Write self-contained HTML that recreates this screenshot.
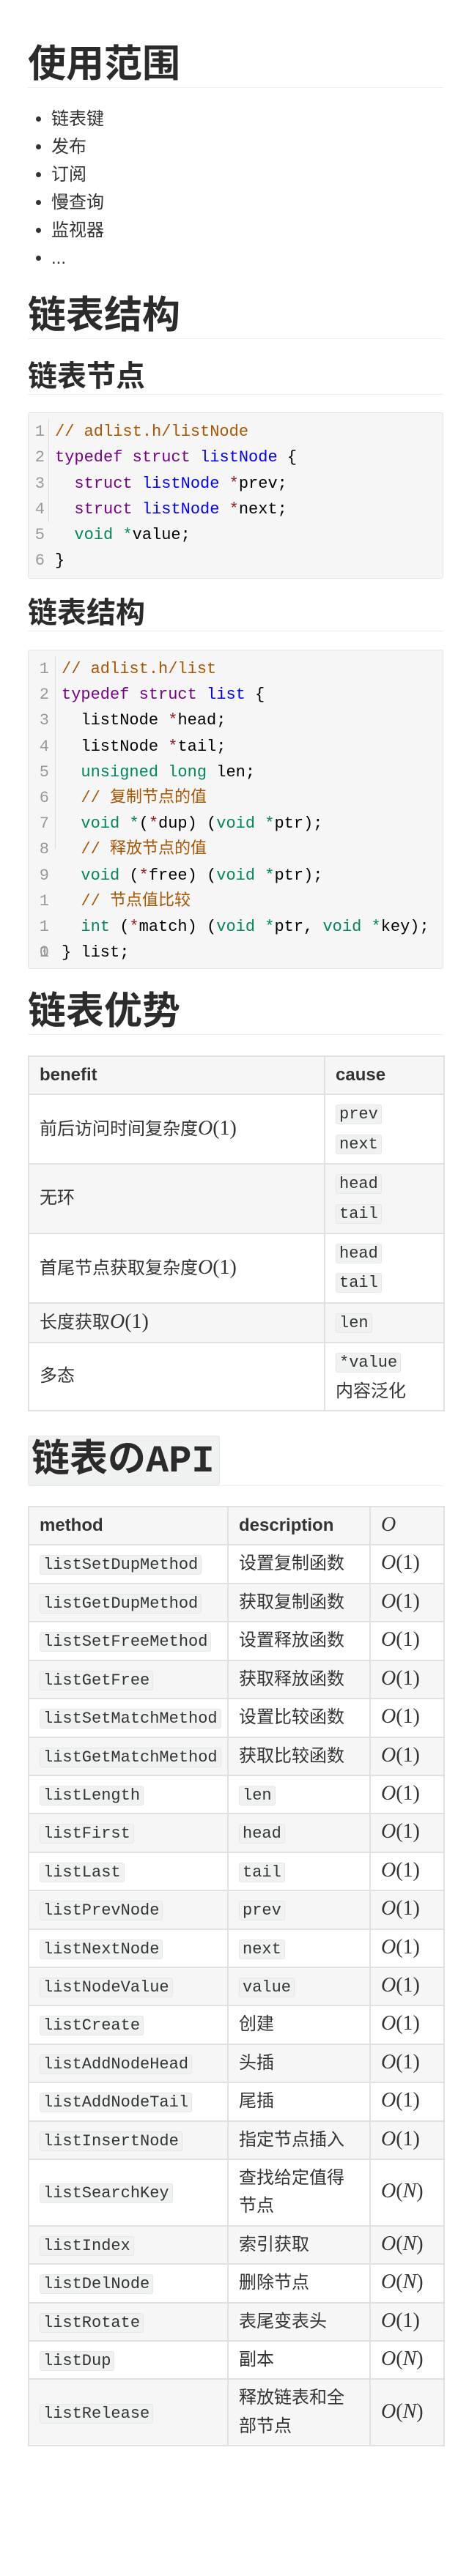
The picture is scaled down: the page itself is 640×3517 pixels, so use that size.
<!DOCTYPE html>
<html><head><meta charset="utf-8">
<style>
*{box-sizing:border-box}
html,body{margin:0;padding:0;background:#fff}
body{width:640px;height:3460px;overflow:hidden;color:#333;font-family:"Liberation Sans","Noto Sans CJK SC",sans-serif;font-size:24px;line-height:38.4px}
.wrap{padding-left:38px;width:605px}
h1,h2{margin:0;font-weight:bold;color:#2b2b2b;border-bottom:1px solid #eee;font-family:"Liberation Sans","Noto Sans CJK SC",sans-serif}
h1{font-size:52px;line-height:62px}
h2{font-size:40px;line-height:48px}
ul{margin:0;padding-left:32px}
ul li{line-height:38px}
.code{position:relative;background:#f6f6f6;border:1px solid #e3e3e3;border-radius:3px;font-family:"Liberation Mono","Noto Sans CJK SC",monospace;font-size:22px;color:#000;white-space:pre}
.code .g{position:absolute;left:0;top:0;text-align:right;color:#999}
.code .bl{position:absolute;border-left:1px solid #ddd}
.c{color:#a50}.k{color:#708}.d{color:#00f}.t{color:#085}.o{color:#981a1a}
table{border-collapse:collapse;width:567px;table-layout:fixed}
th,td{border:2px solid #dfe2e5;padding:6px 14px;vertical-align:middle;text-align:left}
th{background:#f6f6f6;font-weight:bold}
tbody tr:nth-child(even) td{background:#f6f6f6}
code{font-family:"Liberation Mono",monospace;font-size:22px;background:#f0f1f1;border:1px solid #e6e8e8;border-radius:3px;padding:0 4px;color:#333}
.m{font-family:"Liberation Serif",serif;font-size:28px}
.m i{font-style:italic}
.api code,.api .m{line-height:20px}
.api td,.api th{height:51px}
.hc{background:#f0f1f1;border:1px solid #e5e7e7;border-radius:3px;padding:0 6px 0 4px;display:inline-block;line-height:62px}
.hc b{font-family:"Liberation Mono",monospace}
</style></head><body><div class="wrap">

<h1 style="margin-top:57px">使用范围</h1>
<ul style="margin-top:24px">
<li>链表键</li><li>发布</li><li>订阅</li><li>慢查询</li><li>监视器</li><li>...</li>
</ul>

<h1 style="margin-top:28px">链表结构</h1>
<h2 style="margin-top:27px">链表节点</h2>

<div class="code" style="margin-top:24px;height:227px">
<div class="g" style="top:8px;width:22px;line-height:35.3px">1
2
3
4
5
6</div>
<div class="bl" style="left:27px;top:8px;height:141px"></div>
<div style="position:absolute;left:36px;top:8px;line-height:35.3px"><span class="c">// adlist.h/listNode</span>
<span class="k">typedef</span> <span class="k">struct</span> <span class="d">listNode</span> {
  <span class="k">struct</span> <span class="d">listNode</span> <span class="o">*</span>prev;
  <span class="k">struct</span> <span class="d">listNode</span> <span class="o">*</span>next;
  <span class="t">void</span> <span class="t">*</span>value;
}</div>
</div>

<h2 style="margin-top:23px">链表结构</h2>

<div class="code" style="margin-top:25px;height:436px">
<div class="g" style="top:8px;width:28px;line-height:35.2px">1
2
3
4
5
6
7
8
9
1
1
1</div>
<div class="g" style="top:43.2px;width:28px;line-height:35.2px">









0</div>
<div class="bl" style="left:36px;top:8px;height:263px"></div>
<div style="position:absolute;left:45px;top:8px;line-height:35.2px"><span class="c">// adlist.h/list</span>
<span class="k">typedef</span> <span class="k">struct</span> <span class="d">list</span> {
  listNode <span class="o">*</span>head;
  listNode <span class="o">*</span>tail;
  <span class="t">unsigned</span> <span class="t">long</span> len;
  <span class="c">// 复制节点的值</span>
  <span class="t">void</span> <span class="t">*</span>(<span class="o">*</span>dup) (<span class="t">void</span> <span class="t">*</span>ptr);
  <span class="c">// 释放节点的值</span>
  <span class="t">void</span> (<span class="o">*</span>free) (<span class="t">void</span> <span class="t">*</span>ptr);
  <span class="c">// 节点值比较</span>
  <span class="t">int</span> (<span class="o">*</span>match) (<span class="t">void</span> <span class="t">*</span>ptr, <span class="t">void</span> <span class="t">*</span>key);
} list;</div>
</div>

<h1 style="margin-top:27px">链表优势</h1>

<table style="margin-top:28px">
<colgroup><col style="width:404px"><col style="width:163px"></colgroup>
<thead><tr><th>benefit</th><th>cause</th></tr></thead>
<tbody>
<tr><td>前后访问时间复杂度<span class="m"><i>O</i>(1)</span></td><td><code>prev</code><br><code>next</code></td></tr>
<tr><td>无环</td><td><code>head</code><br><code>tail</code></td></tr>
<tr><td>首尾节点获取复杂度<span class="m"><i>O</i>(1)</span></td><td><code>head</code><br><code>tail</code></td></tr>
<tr><td>长度获取<span class="m"><i>O</i>(1)</span></td><td><code>len</code></td></tr>
<tr><td>多态</td><td><code>*value</code><br>内容泛化</td></tr>
</tbody></table>

<h1 style="margin-top:33px;line-height:64px"><span class="hc">链表の<b>API</b></span></h1>

<table class="api" style="margin-top:27px">
<colgroup><col style="width:272px"><col style="width:194px"><col style="width:101px"></colgroup>
<thead><tr><th>method</th><th>description</th><th><span class="m" style="font-weight:normal"><i>O</i></span></th></tr></thead>
<tbody>
<tr><td><code>listSetDupMethod</code></td><td>设置复制函数</td><td><span class="m"><i>O</i>(1)</span></td></tr>
<tr><td><code>listGetDupMethod</code></td><td>获取复制函数</td><td><span class="m"><i>O</i>(1)</span></td></tr>
<tr><td><code>listSetFreeMethod</code></td><td>设置释放函数</td><td><span class="m"><i>O</i>(1)</span></td></tr>
<tr><td><code>listGetFree</code></td><td>获取释放函数</td><td><span class="m"><i>O</i>(1)</span></td></tr>
<tr><td><code>listSetMatchMethod</code></td><td>设置比较函数</td><td><span class="m"><i>O</i>(1)</span></td></tr>
<tr><td><code>listGetMatchMethod</code></td><td>获取比较函数</td><td><span class="m"><i>O</i>(1)</span></td></tr>
<tr><td><code>listLength</code></td><td><code>len</code></td><td><span class="m"><i>O</i>(1)</span></td></tr>
<tr><td><code>listFirst</code></td><td><code>head</code></td><td><span class="m"><i>O</i>(1)</span></td></tr>
<tr><td><code>listLast</code></td><td><code>tail</code></td><td><span class="m"><i>O</i>(1)</span></td></tr>
<tr><td><code>listPrevNode</code></td><td><code>prev</code></td><td><span class="m"><i>O</i>(1)</span></td></tr>
<tr><td><code>listNextNode</code></td><td><code>next</code></td><td><span class="m"><i>O</i>(1)</span></td></tr>
<tr><td><code>listNodeValue</code></td><td><code>value</code></td><td><span class="m"><i>O</i>(1)</span></td></tr>
<tr><td><code>listCreate</code></td><td>创建</td><td><span class="m"><i>O</i>(1)</span></td></tr>
<tr><td><code>listAddNodeHead</code></td><td>头插</td><td><span class="m"><i>O</i>(1)</span></td></tr>
<tr><td><code>listAddNodeTail</code></td><td>尾插</td><td><span class="m"><i>O</i>(1)</span></td></tr>
<tr><td><code>listInsertNode</code></td><td>指定节点插入</td><td><span class="m"><i>O</i>(1)</span></td></tr>
<tr><td><code>listSearchKey</code></td><td>查找给定值得<br>节点</td><td><span class="m"><i>O</i>(<i>N</i>)</span></td></tr>
<tr><td><code>listIndex</code></td><td>索引获取</td><td><span class="m"><i>O</i>(<i>N</i>)</span></td></tr>
<tr><td><code>listDelNode</code></td><td>删除节点</td><td><span class="m"><i>O</i>(<i>N</i>)</span></td></tr>
<tr><td><code>listRotate</code></td><td>表尾变表头</td><td><span class="m"><i>O</i>(1)</span></td></tr>
<tr><td><code>listDup</code></td><td>副本</td><td><span class="m"><i>O</i>(<i>N</i>)</span></td></tr>
<tr><td><code>listRelease</code></td><td>释放链表和全<br>部节点</td><td><span class="m"><i>O</i>(<i>N</i>)</span></td></tr>
</tbody></table>

</div></body></html>
